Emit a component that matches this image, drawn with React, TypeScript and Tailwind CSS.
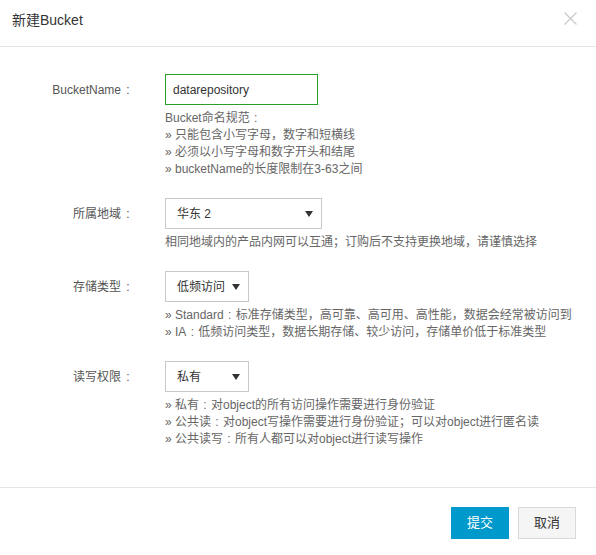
import React from "react";

const font = { fontFamily: '"Liberation Sans", "Noto Sans CJK SC", sans-serif' };

function Colonize({ text }: { text: string }) {
  const parts = text.split("：");
  return (
    <>
      {parts.map((p, i) => (
        <React.Fragment key={i}>
          {p}
          {i < parts.length - 1 && (
            <span className="inline-block w-[12px] text-center">:</span>
          )}
        </React.Fragment>
      ))}
    </>
  );
}

function Arrow() {
  return (
    <svg width="8" height="6" viewBox="0 0 8 6" className="shrink-0">
      <path d="M0 0 L8 0 L4 6 Z" fill="#333" />
    </svg>
  );
}

function Row({
  label,
  control,
  help,
}: {
  label: string;
  control: React.ReactNode;
  help: string[];
}) {
  return (
    <div className="flex">
      <div className="w-[135px] h-[31px] flex items-center justify-end text-[12px] text-[#555] shrink-0">
        <span>
          {label}
          <span className="inline-block w-[14px] text-center">:</span>
        </span>
      </div>
      <div className="ml-[30px] flex flex-col">
        {control}
        <div className="mt-[5px] text-[12px] leading-[17px] text-[#666]">
          {help.map((h, i) => (
            <div key={i} className="whitespace-nowrap">
              <Colonize text={h} />
            </div>
          ))}
        </div>
      </div>
    </div>
  );
}

function Select({ value, width }: { value: string; width: string }) {
  return (
    <div
      className={`${width} h-[31px] border border-[#c8c8c8] bg-white flex items-center justify-between pl-[11px] pr-[8px] text-[12px] text-[#333]`}
    >
      <span>{value}</span>
      <Arrow />
    </div>
  );
}

export default function App() {
  return (
    <div className="w-[596px] h-[555px] bg-white flex flex-col" style={font}>
      <div className="h-[47px] border-b border-[#e5e5e5] flex items-center justify-between pl-[12px] pr-[19px] shrink-0">
        <span className="text-[14px] text-[#333] -mt-[6px]">新建Bucket</span>
        <svg width="13" height="13" viewBox="0 0 13 13" className="-mt-[10px]">
          <path d="M0.5 0.5 L12.5 12.5 M12.5 0.5 L0.5 12.5" stroke="#cacaca" strokeWidth="1.3" />
        </svg>
      </div>
      <div className="pt-[27px] pb-[39px] flex flex-col gap-[20px] border-b border-[#e5e5e5]">
        <Row
          label="BucketName"
          control={
            <div className="w-[153px] h-[31px] border border-[#2a9d2a] flex items-center pl-[7px] text-[12px] text-[#333]">
              datarepository
            </div>
          }
          help={[
            "Bucket命名规范：",
            "» 只能包含小写字母，数字和短横线",
            "» 必须以小写字母和数字开头和结尾",
            "» bucketName的长度限制在3-63之间",
          ]}
        />
        <Row
          label="所属地域"
          control={<Select value="华东 2" width="w-[157px]" />}
          help={["相同地域内的产品内网可以互通；订购后不支持更换地域，请谨慎选择"]}
        />
        <Row
          label="存储类型"
          control={<Select value="低频访问" width="w-[84px]" />}
          help={[
            "» Standard：标准存储类型，高可靠、高可用、高性能，数据会经常被访问到",
            "» IA：低频访问类型，数据长期存储、较少访问，存储单价低于标准类型",
          ]}
        />
        <Row
          label="读写权限"
          control={<Select value="私有" width="w-[84px]" />}
          help={[
            "» 私有：对object的所有访问操作需要进行身份验证",
            "» 公共读：对object写操作需要进行身份验证；可以对object进行匿名读",
            "» 公共读写：所有人都可以对object进行读写操作",
          ]}
        />
      </div>
      <div className="flex justify-end gap-[9px] pt-[19px] pr-[20px]">
        <button className="w-[58px] h-[32px] bg-[#0099cc] text-white text-[13px]">提交</button>
        <button className="w-[58px] h-[32px] bg-[#f5f5f5] border border-[#d9d9d9] text-[#333] text-[13px]">
          取消
        </button>
      </div>
    </div>
  );
}
